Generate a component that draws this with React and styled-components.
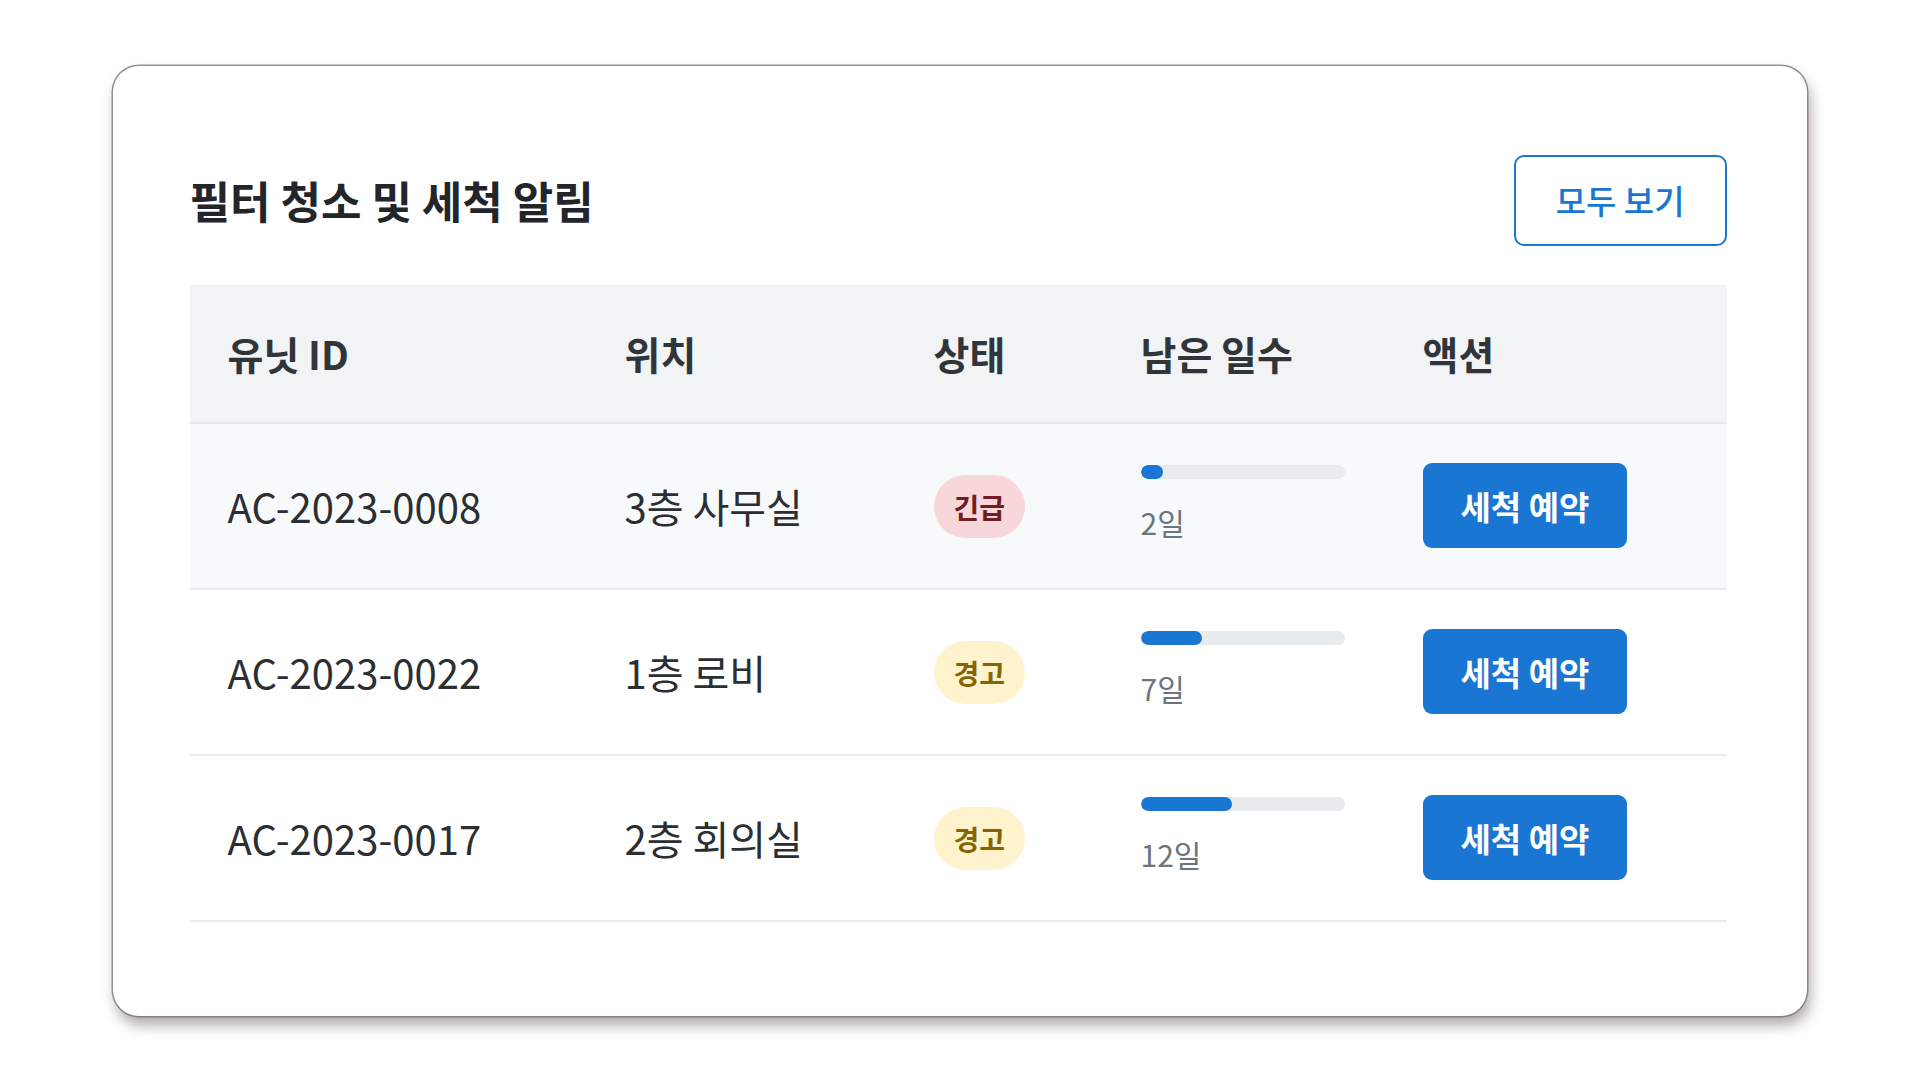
import React from "react";
import styled, { createGlobalStyle } from "styled-components";

const GlobalStyle = createGlobalStyle`
  html, body {
    margin: 0;
    padding: 0;
    background: #ffffff;
  }
  body {
    font-family: "Noto Sans CJK KR", "Noto Sans", sans-serif;
    color: #212529;
  }
`;

const Page = styled.div`
  min-height: 100vh;
  display: flex;
  align-items: center;
  justify-content: center;
  box-sizing: border-box;
`;

const Card = styled.section`
  width: 1694px;
  box-sizing: border-box;
  background: #ffffff;
  border-radius: 26px;
  padding: 89px 80px 94px 77px;
  box-shadow: 0 0 0 1.5px rgba(120, 110, 110, 0.75),
    3px 9px 14px rgba(70, 60, 60, 0.45);
`;

const HeaderRow = styled.div`
  display: flex;
  align-items: center;
  justify-content: space-between;
  margin-bottom: 39px;
`;

const Title = styled.h2`
  margin: 0;
  font-size: 44px;
  font-weight: 700;
  color: #222529;
  letter-spacing: 0;
`;

const OutlineButton = styled.button`
  display: inline-flex;
  align-items: center;
  justify-content: center;
  height: 91px;
  padding: 0 40px;
  box-sizing: border-box;
  background: #ffffff;
  border: 2.5px solid #1976d2;
  border-radius: 10px;
  color: #1976d2;
  font-family: inherit;
  font-size: 33px;
  font-weight: 500;
  cursor: pointer;
`;

const Table = styled.table`
  width: 100%;
  border-collapse: collapse;
  table-layout: fixed;
`;

const Col = styled.col`
  width: ${(p) => p.$w};
`;

const HeadCell = styled.th`
  height: 137px;
  padding: 0 38px;
  text-align: left;
  background: #f1f3f5;
  border-bottom: 2px solid #e6e9ec;
  color: #30353a;
  font-size: 39px;
  font-weight: 700;
`;

const Row = styled.tr`
  background: ${(p) => (p.$highlight ? "#f8f9fa" : "#ffffff")};
  border-bottom: 2px solid #e9ecef;
`;

const Cell = styled.td`
  height: 164px;
  padding: 0 38px;
  font-size: 40px;
  font-weight: 400;
  color: #2b2f33;
  vertical-align: middle;
`;

const Badge = styled.span`
  display: inline-flex;
  align-items: center;
  justify-content: center;
  height: 63px;
  padding: 0 20px;
  border-radius: 999px;
  font-size: 28px;
  font-weight: 700;
  background: ${(p) => (p.$tone === "danger" ? "#f8d7da" : "#fff3cd")};
  color: ${(p) => (p.$tone === "danger" ? "#721c24" : "#856404")};
`;

const DaysBox = styled.div`
  display: flex;
  flex-direction: column;
  width: 204px;
  padding-bottom: 4px;
`;

const Track = styled.div`
  height: 14px;
  border-radius: 7px;
  background: #e9ecef;
  overflow: hidden;
`;

const Fill = styled.div`
  height: 100%;
  border-radius: 7px;
  background: #1976d2;
`;

const DaysLabel = styled.span`
  margin-top: 23px;
  font-size: 30px;
  line-height: 1.35;
  color: #6c757d;
`;

const ActionButton = styled.button`
  display: inline-flex;
  align-items: center;
  justify-content: center;
  height: 85px;
  padding: 0 38px;
  border: none;
  border-radius: 9px;
  background: #1976d2;
  color: #ffffff;
  font-family: inherit;
  font-size: 33px;
  font-weight: 700;
  cursor: pointer;
`;

const units = [
  { id: "AC-2023-0008", location: "3층 사무실", status: "긴급", tone: "danger", days: 2, pct: 11 },
  { id: "AC-2023-0022", location: "1층 로비", status: "경고", tone: "warning", days: 7, pct: 30 },
  { id: "AC-2023-0017", location: "2층 회의실", status: "경고", tone: "warning", days: 12, pct: 45 },
];

export default function App() {
  return (
    <>
      <GlobalStyle />
      <Page>
        <Card>
          <HeaderRow>
            <Title>필터 청소 및 세척 알림</Title>
            <OutlineButton>모두 보기</OutlineButton>
          </HeaderRow>
          <Table>
            <colgroup>
              <Col $w="397px" />
              <Col $w="309px" />
              <Col $w="207px" />
              <Col $w="282px" />
              <Col $w="auto" />
            </colgroup>
            <thead>
              <tr>
                <HeadCell>유닛 ID</HeadCell>
                <HeadCell>위치</HeadCell>
                <HeadCell>상태</HeadCell>
                <HeadCell>남은 일수</HeadCell>
                <HeadCell>액션</HeadCell>
              </tr>
            </thead>
            <tbody>
              {units.map((u, i) => (
                <Row key={u.id} $highlight={i === 0}>
                  <Cell>{u.id}</Cell>
                  <Cell>{u.location}</Cell>
                  <Cell>
                    <Badge $tone={u.tone}>{u.status}</Badge>
                  </Cell>
                  <Cell>
                    <DaysBox>
                      <Track>
                        <Fill style={{ width: `${u.pct}%` }} />
                      </Track>
                      <DaysLabel>{u.days}일</DaysLabel>
                    </DaysBox>
                  </Cell>
                  <Cell>
                    <ActionButton>세척 예약</ActionButton>
                  </Cell>
                </Row>
              ))}
            </tbody>
          </Table>
        </Card>
      </Page>
    </>
  );
}
